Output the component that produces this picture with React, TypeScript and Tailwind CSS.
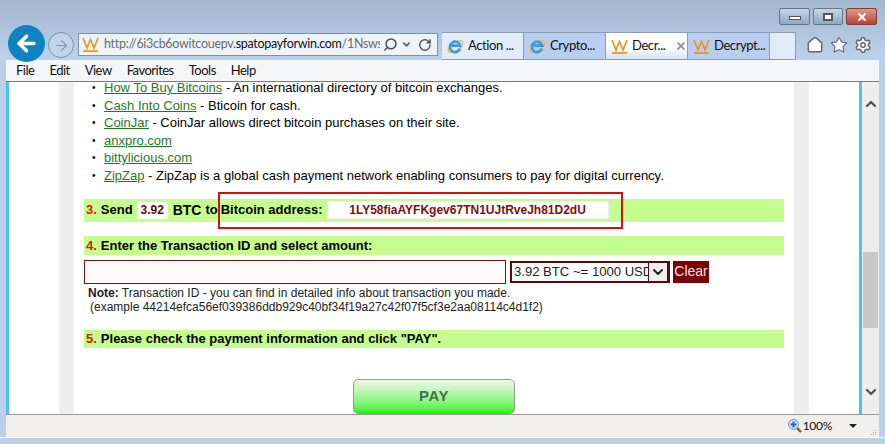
import { ArrowLeft, ArrowRight, ChevronDown, Home, RotateCw, Search, Settings, Star, X } from "lucide-react"

const sans = "font-['Liberation_Sans',Arial,sans-serif]"
const ui = "font-['Lato','Open_Sans',sans-serif]"

const WLogo = ({ size = 17 }: { size?: number }) => (
  <svg width={size} height={size} viewBox="0 0 17 17" className="shrink-0">
    <path d="M1 2 L5 12 L8.5 3.5 L12 12 L16 2" fill="none" stroke="#e8971f" strokeWidth="1.7" />
    <path d="M1 15 H16" stroke="#e8971f" strokeWidth="1.8" />
  </svg>
)

const IeLogo = () => (
  <svg width="17" height="17" viewBox="0 0 17 17" className="shrink-0">
    <ellipse cx="8.5" cy="8.5" rx="8.5" ry="4" transform="rotate(-35 8.5 8.5)" fill="none" stroke="#e8b93a" strokeWidth="1.2" />
    <path d="M13 10.8 A5.2 5.2 0 1 1 13.2 7.6 H4.5" fill="none" stroke="#3d9bdc" strokeWidth="2.6" />
  </svg>
)

const ZoomIcon = () => (
  <svg width="14" height="14" viewBox="0 0 14 14" className="shrink-0">
    <path d="M8.5 8.5 L13 13" stroke="#8a5a2a" strokeWidth="2.4" />
    <circle cx="5.5" cy="5.5" r="5" fill="#cfe3f7" stroke="#7f93a8" />
    <path d="M5.5 2.5 V8.5 M2.5 5.5 H8.5" stroke="#1c6fc4" strokeWidth="2" />
  </svg>
)

const Grip = () => (
  <svg width="6" height="6" viewBox="0 0 6 6" className="shrink-0 self-end mb-[1px]">
    <path d="M4 0h1v1H4z M2 2h1v1H2z M4 2h1v1H4z M0 4h1v1H0z M2 4h1v1H2z M4 4h1v1H4z" fill="#a8a8a8" />
  </svg>
)

const tabs = [
  { label: "Action ...", bg: "bg-[#e2ecf9]", icon: <IeLogo /> },
  { label: "Crypto...", bg: "bg-[#b9cdf0]", icon: <IeLogo /> },
  { label: "Decr...", bg: "bg-gradient-to-b from-[#ffffff] via-[#ffffff] to-[#d5e2f6]", icon: <WLogo />, active: true },
  { label: "Decrypt...", bg: "bg-[#b9cdf0]", icon: <WLogo /> },
]

const links = [
  { name: "How To Buy Bitcoins", rest: " - An international directory of bitcoin exchanges." },
  { name: "Cash Into Coins", rest: " - Bticoin for cash." },
  { name: "CoinJar", rest: " - CoinJar allows direct bitcoin purchases on their site." },
  { name: "anxpro.com", rest: "" },
  { name: "bittylicious.com", rest: "" },
  { name: "ZipZap", rest: " - ZipZap is a global cash payment network enabling consumers to pay for digital currency." },
]

const App = () => {
  return (
    <div className="w-[885px] h-[444px] flex flex-col overflow-hidden bg-[#b9d0e8]">
      <div className="h-[60px] shrink-0 bg-gradient-to-b from-[#a3b7cf] to-[#bcd2ea] flex flex-col">
        <div className="h-[32px] flex justify-end items-start pt-[8px] pr-[8px] gap-[3px]">
          <div className="w-[31px] h-[17px] border border-[#5f7891] rounded-[2px] bg-gradient-to-b from-[#c6d6e8] to-[#8fa7c0] flex items-center justify-center">
            <div className="w-[12px] h-[4px] mt-[3px] bg-white border border-[#555]"></div>
          </div>
          <div className="w-[30px] h-[17px] border border-[#5f7891] rounded-[2px] bg-gradient-to-b from-[#c6d6e8] to-[#8fa7c0] flex items-center justify-center">
            <div className="w-[10px] h-[8px] bg-white border-2 border-[#555]"></div>
          </div>
          <div className="w-[31px] h-[17px] border border-[#7a4038] rounded-[2px] bg-gradient-to-b from-[#dd9a8c] to-[#bb3f2e] flex items-center justify-center">
            <X size={12} strokeWidth={4} className="text-white" />
          </div>
        </div>
        <div className="flex h-[28px] relative">
          <div className="absolute left-[8px] top-[-7px] w-[37px] h-[37px] rounded-full bg-[#0f83c1] flex items-center justify-center z-10">
            <ArrowLeft size={25} strokeWidth={3.5} className="text-white" />
          </div>
          <div className="ml-[48px] w-[26px] h-[26px] rounded-full border border-[#7c93ad] flex items-center justify-center bg-[#c3d4e8]">
            <ArrowRight size={17} strokeWidth={1.5} className="text-[#8296ad]" />
          </div>
          <div className={`ml-[4px] w-[360px] h-[23px] mt-[1px] border border-[#7d90a6] bg-[#eef3fa] flex items-center pl-[3px] pr-[5px] text-[12.5px] tracking-[-0.3px] ${ui}`}>
            <WLogo />
            <span className="ml-[5px] w-[280px] overflow-hidden whitespace-nowrap text-[#6d6d6d]">
              http://6i3cb6owitcouepv.<span className="text-[#111]">spatopayforwin.com</span>/1Nsws
            </span>
            <Search size={15} strokeWidth={2.5} className="ml-[3px] text-[#555] -scale-x-100" />
            <ChevronDown size={11} strokeWidth={4} className="ml-[4px] text-[#666]" />
            <RotateCw size={14} strokeWidth={2.5} className="ml-[6px] text-[#555]" />
          </div>
          <div className="ml-[4px] flex h-[28px] border-b border-[#8a9db5]">
            {tabs.map(({ label, bg, icon, active }) => (
              <div key={label} className={`w-[82px] ${bg} border-t border-r border-[#8a9db5] flex items-center pl-[5px] gap-[4px] text-[13px] tracking-[-0.4px] text-[#111] ${ui}`}>
                {icon}
                <span className="whitespace-nowrap">{label}</span>
                {active && <X size={12} strokeWidth={3.5} className="ml-[5px] shrink-0 text-[#888]" />}
              </div>
            ))}
            <div className="w-[26px] bg-[#e2ecf9] border-t border-r border-[#8a9db5]"></div>
          </div>
          <div className="ml-[10px] flex items-center gap-[6px] -mt-[3px] text-white">
            <Home size={18} strokeWidth={2} fill="#ffffff" stroke="#667" />
            <Star size={18} strokeWidth={1.5} fill="#ffffff" stroke="#667" />
            <Settings size={18} strokeWidth={2} fill="#ffffff" stroke="#667" />
          </div>
        </div>
      </div>

      <div className="flex-1 min-h-0 flex flex-col mx-[6px]">
        <div className={`h-[22px] shrink-0 bg-[#f5f6f7] border-b border-[#7d7d7d] flex items-center pl-[10px] gap-[15px] text-[13px] tracking-[-0.5px] text-[#111] ${ui}`}>
          <span>File</span>
          <span>Edit</span>
          <span>View</span>
          <span>Favorites</span>
          <span>Tools</span>
          <span>Help</span>
        </div>

        <div className="flex-1 min-h-0 flex">
          <div className="w-[3px] bg-[#47c3ee]"></div>
          <div className="w-[50px] bg-white"></div>
          <div className="w-[15px] bg-[#eeeeee]"></div>
          <div className={`w-[720px] bg-white overflow-hidden text-[13px] text-black ${sans}`}>
            <ul className="pl-[18px] -mt-[3px]">
              {links.map(({ name, rest }) => (
                <li key={name} className="h-[17.6px] leading-[17.6px] whitespace-nowrap flex items-center">
                  <span className="w-[12px] text-[10px]">•</span>
                  <span className="text-[#1f7a1f] underline">{name}</span>
                  <span className="whitespace-pre">{rest}</span>
                </li>
              ))}
            </ul>

            <div className="mx-[10px] mt-[14px] h-[23px] bg-[#c6fd8f] flex items-center font-bold pl-[2px]">
              <span className="text-[#cc2200]">3.</span>
              <span className="ml-[4px]">Send</span>
              <span className="ml-[4px] w-[31px] h-[17px] leading-[17px] text-center bg-white text-[#5c0a0a] text-[12px]">3.92</span>
              <span className="ml-[5px] text-[14px]">BTC</span>
              <span className="ml-[4px]">to</span>
              <div className="w-[405px] h-[37px] -my-[7px] border-2 border-[#d80f0f] flex items-center">
                <span className="ml-[1px]">Bitcoin address:</span>
                <span className="ml-[4px] w-[282px] h-[18px] leading-[16px] bg-white text-center text-[#7a0f0f] text-[12px] font-bold border border-[#eeeeee]">1LY58fiaAYFKgev67TN1UJtRveJh81D2dU</span>
              </div>
            </div>

            <div className="mx-[10px] mt-[14px] h-[19px] pt-[1px] bg-[#c6fd8f] flex items-center font-bold">
              <span className="text-[#cc2200] ml-[2px]">4.</span>
              <span className="ml-[4px]">Enter the Transaction ID and select amount:</span>
            </div>

            <div className="ml-[10px] mt-[5px] flex items-center">
              <div className="w-[422px] h-[24px] border border-[#7a1111] bg-[#fbf9f9]"></div>
              <div className="ml-[4px] w-[160px] h-[22px] border-2 border-[#5c0808] flex items-center overflow-hidden pl-[2px] text-[13.1px] text-[#222]">
                <span className="w-[136px] overflow-hidden whitespace-nowrap">3.92 BTC ~= 1000 USD</span>
                <div className="w-[20px] h-full bg-[#eeeeee] border-x border-[#5c0808] flex items-center justify-center">
                  <ChevronDown size={16} strokeWidth={3} className="text-[#222]" />
                </div>
              </div>
              <div className="ml-[3px] w-[36px] h-[22px] bg-[#7c0000] text-[14px] text-[#e6e6e6] flex items-center justify-center">Clear</div>
            </div>

            <div className="ml-[14px] mt-[2px] text-[12px] leading-[14.5px] text-[#222]">
              <p><b>Note:</b> Transaction ID - you can find in detailed info about transaction you made.</p>
              <p className="ml-[2px]">(example 44214efca56ef039386ddb929c40bf34f19a27c42f07f5cf3e2aa08114c4d1f2)</p>
            </div>

            <div className="mx-[10px] mt-[15px] h-[18px] pt-[1px] bg-[#c6fd8f] flex items-center font-bold">
              <span className="text-[#cc2200] ml-[2px]">5.</span>
              <span className="ml-[4px]">Please check the payment information and click "PAY".</span>
            </div>

            <div className="ml-[279px] mt-[31px] w-[162px] h-[35px] rounded-[5px] border border-[#999999] bg-gradient-to-b from-[#eef5ea] to-[#1ff20a] flex items-center justify-center font-bold text-[#44704a] text-[15px] tracking-[0.5px]">
              PAY
            </div>
          </div>
          <div className="w-[15px] bg-[#eeeeee]"></div>
          <div className="w-[50px] bg-white"></div>
          <div className="w-[3px] bg-[#47c3ee]"></div>
          <div className="w-[17px] bg-[#eeeeee] flex flex-col items-center">
            <ChevronDown size={16} strokeWidth={3.5} className="text-[#555] rotate-180 mt-[14px]" />
            <div className="w-[15px] h-[76px] mt-[140px] bg-[#c8c8c8]"></div>
            <ChevronDown size={16} strokeWidth={3.5} className="text-[#555] mb-[14px] mt-auto" />
          </div>
        </div>

        <div className={`h-[23px] shrink-0 bg-[#f1eeee] border-t border-[#9a9a9a] flex items-center justify-end pr-[2px] text-[12px] tracking-[-0.3px] text-[#111] ${ui}`}>
          <ZoomIcon />
          <span className="ml-[1px]">100%</span>
          <div className="ml-[17px] w-0 h-0 border-x-[4px] border-x-transparent border-t-[4px] border-t-[#222]"></div>
          <div className="ml-[14px] self-end"><Grip /></div>
        </div>
      </div>
      <div className="h-[7px] shrink-0 border-t border-white bg-[#b9d0e8]"></div>
    </div>
  )
}

export default App
